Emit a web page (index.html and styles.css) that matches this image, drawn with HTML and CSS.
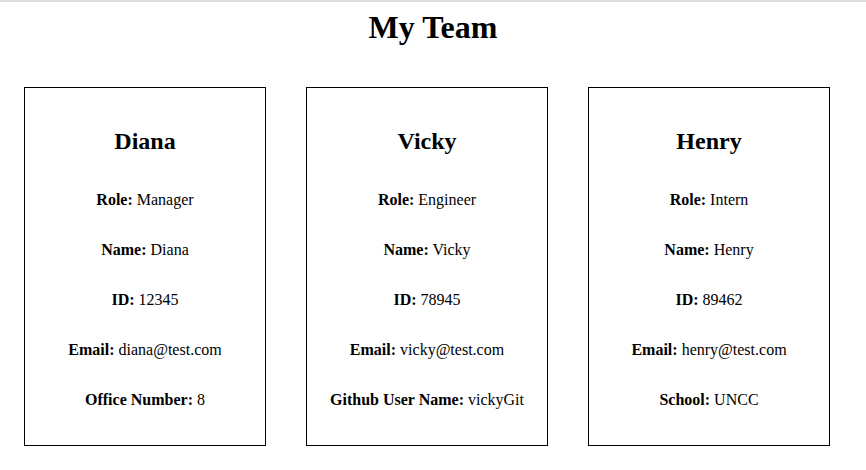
FILE: index.html
```html
<!DOCTYPE html>
<html lang="en">
<head>
<meta charset="utf-8">
<title>My Team</title>
<link rel="stylesheet" href="styles.css">
</head>
<body>
<header class="top">
  <h1 class="title">My Team</h1>
</header>
<main class="team">
  <section class="card">
    <h2 class="card-name">Diana</h2>
    <p class="row"><strong>Role:</strong> Manager</p>
    <p class="row"><strong>Name:</strong> Diana</p>
    <p class="row"><strong>ID:</strong> 12345</p>
    <p class="row"><strong>Email:</strong> diana@test.com</p>
    <p class="row"><strong>Office Number:</strong> 8</p>
  </section>
  <section class="card">
    <h2 class="card-name">Vicky</h2>
    <p class="row"><strong>Role:</strong> Engineer</p>
    <p class="row"><strong>Name:</strong> Vicky</p>
    <p class="row"><strong>ID:</strong> 78945</p>
    <p class="row"><strong>Email:</strong> vicky@test.com</p>
    <p class="row"><strong>Github User Name:</strong> vickyGit</p>
  </section>
  <section class="card">
    <h2 class="card-name">Henry</h2>
    <p class="row"><strong>Role:</strong> Intern</p>
    <p class="row"><strong>Name:</strong> Henry</p>
    <p class="row"><strong>ID:</strong> 89462</p>
    <p class="row"><strong>Email:</strong> henry@test.com</p>
    <p class="row"><strong>School:</strong> UNCC</p>
  </section>
</main>
</body>
</html>
```
FILE: styles.css
```css
html, body {
  margin: 0;
  padding: 0;
  background: #ffffff;
}
body {
  font-family: "Liberation Serif", "Times New Roman", serif;
  color: #000;
  border-top: 2px solid #dcdcdc;
}
.top {
  text-align: center;
}
.title {
  margin: 7px 0 0;
  font-size: 32px;
  line-height: 37px;
  font-weight: bold;
}
.team {
  display: flex;
  gap: 40px;
  padding-left: 24px;
  margin-top: 41px;
}
.card {
  box-sizing: border-box;
  width: 242px;
  height: 359px;
  border: 1px solid #000;
  padding: 39px 4px 0;
  text-align: center;
}
.card-name {
  margin: 0 0 36px;
  font-size: 24px;
  line-height: 28px;
  font-weight: bold;
}
.row {
  margin: 0;
  font-size: 16px;
  line-height: 18px;
}
.row + .row {
  margin-top: 32px;
}
.row strong {
  font-weight: bold;
}
```
